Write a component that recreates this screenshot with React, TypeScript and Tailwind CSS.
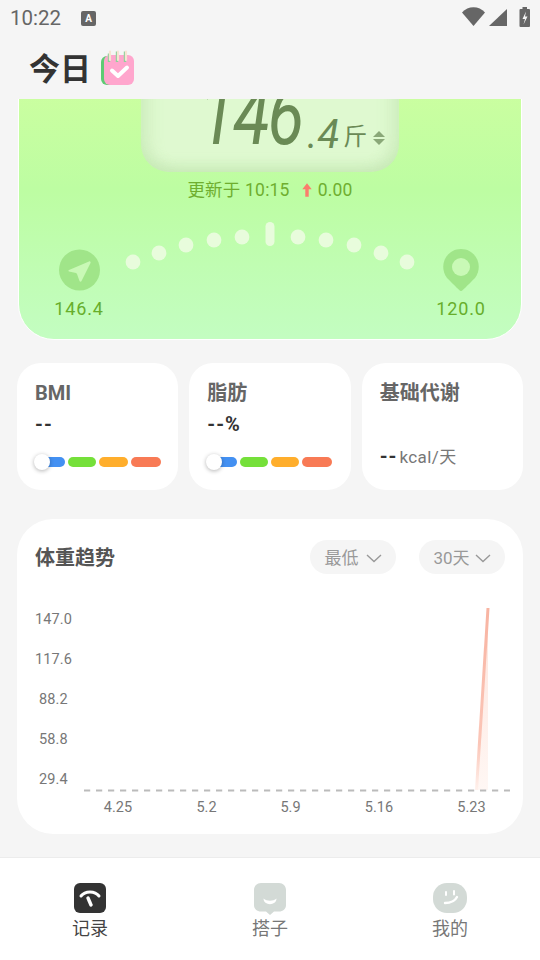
import React from "react";

const sans = "font-['Roboto','Noto_Sans_CJK_SC',sans-serif]";

function StatusIcons() {
  return (
    <svg width="68" height="24" viewBox="0 0 68 24" className="block">
      <path d="M0 6.5C6-0.5 17-0.5 23 6.5L11.5 20Z" fill="#666" />
      <path d="M27 20L45 3V20Z" fill="#666" />
      <rect x="57.5" y="3" width="10.5" height="18" rx="1" fill="#666" />
      <rect x="60.5" y="1" width="4.5" height="3" fill="#666" />
      <path d="M64 5.5L60.5 13H63L61.5 18.5L65.5 10.5H63Z" fill="#f5f5f5" />
    </svg>
  );
}

function CalendarIcon() {
  return (
    <svg width="33" height="36" viewBox="0 0 33 36" className="mt-[-2px] block">
      <rect x="0" y="6" width="28" height="29" rx="6" fill="#5ecb73" />
      <rect x="3" y="5" width="30" height="30" rx="6" fill="#ffa6cd" />
      <path d="M6 3.5V12M14 1.5V12M22 1.5V12" stroke="#8fd09a" strokeWidth="2.4" transform="translate(2 0)" />
      <path d="M6 1.5V10M14 1.5V10M22 1.5V10" stroke="#f7e3d2" strokeWidth="2.2" strokeLinecap="round" transform="translate(3 0)" />
      <path d="M11 20.5L17 26L26 17.5" stroke="#fff" strokeWidth="4" fill="none" strokeLinecap="round" strokeLinejoin="round" />
    </svg>
  );
}

function Gauge() {
  const xs = [133, 159, 186, 214, 242, 298, 326, 354, 381, 407];
  const ys = [261, 252, 244, 239, 236, 236, 239, 244, 252, 261];
  return (
    <svg width="300" height="50" viewBox="120 220 300 50" className="block">
      {xs.map((x, i) => (
        <circle key={x} cx={x} cy={ys[i]} r="7.4" fill="#e8fcdc" />
      ))}
      <rect x="265.5" y="221" width="9" height="24" rx="4.5" fill="#e8fcdc" />
    </svg>
  );
}

function Scale({ widths }: { widths: number[] }) {
  const colors = ["bg-[#4390f2]", "bg-[#75e03a]", "bg-[#ffae2c]", "bg-[#f87a55]"];
  return (
    <div className="relative mt-[21px] flex h-[10px] gap-[3px] pl-[6px]">
      {widths.map((w, i) => (
        <div key={i} className={`h-[10px] rounded-full ${colors[i]}`} style={{ width: w }} />
      ))}
      <div className="absolute left-[-1px] top-[-3px] h-4 w-4 rounded-full bg-white shadow-[0_1px_4px_rgba(0,0,0,0.3)]" />
    </div>
  );
}

function Chevron() {
  return (
    <svg width="16" height="9" viewBox="0 0 16 9" className="block">
      <path d="M1 1L8 7.5L15 1" stroke="#999" strokeWidth="1.4" fill="none" />
    </svg>
  );
}

function Chart() {
  const ys = [
    ["147.0", 624],
    ["117.6", 664],
    ["88.2", 704],
    ["58.8", 744],
    ["29.4", 784],
  ] as const;
  const xs = [
    ["4.25", 118],
    ["5.2", 206.5],
    ["5.9", 290.5],
    ["5.16", 379],
    ["5.23", 471.5],
  ] as const;
  return (
    <svg width="506" height="225" viewBox="17 600 506 225" className="block" fontFamily="Roboto, sans-serif">
      <defs>
        <linearGradient id="ln" x1="0" y1="0" x2="0" y2="1">
          <stop offset="0" stopColor="#f8b4a2" />
          <stop offset="0.75" stopColor="#fbc6b8" />
          <stop offset="1" stopColor="#fff1ec" />
        </linearGradient>
        <linearGradient id="ar" x1="0" y1="0" x2="0" y2="1">
          <stop offset="0" stopColor="#fde4dc" />
          <stop offset="1" stopColor="#fff7f4" />
        </linearGradient>
      </defs>
      <path d="M488 608L476 790H488Z" fill="url(#ar)" />
      <path d="M488 608L476.5 790" stroke="url(#ln)" strokeWidth="3" fill="none" />
      <line x1="84" x2="510" y1="790.5" y2="790.5" stroke="#bbb" strokeWidth="2" strokeDasharray="6.2 5.8" />
      {ys.map(([t, y], i) => (
        <text key={t} x={i < 2 ? 35 : 39} y={y} fontSize="14.5" letterSpacing="0.1" fill="#777">
          {t}
        </text>
      ))}
      {xs.map(([t, x]) => (
        <text key={t} x={x} y="812" fontSize="14.5" fill="#777" textAnchor="middle">
          {t}
        </text>
      ))}
    </svg>
  );
}

export default function App() {
  return (
    <div className={`flex h-[960px] w-[540px] flex-col overflow-hidden bg-[#f5f5f5] ${sans}`}>
      <div className="flex h-[36px] shrink-0 items-center pl-[10px] pr-[10px] text-[20.5px] text-[#666]">
        <span>10:22</span>
        <span className="ml-[20px] flex h-[15px] w-[15px] items-center justify-center rounded-[2px] bg-[#666] text-[10px] font-bold text-white">
          A
        </span>
        <div className="ml-auto">
          <StatusIcons />
        </div>
      </div>

      <div className="flex h-[63px] shrink-0 items-center gap-[10px] pl-[29px] pt-[3px]">
        <span className="text-[31px] font-bold leading-none text-[#333]">今日</span>
        <CalendarIcon />
      </div>

      <div className="min-h-0 flex-1 overflow-hidden">
        <div className="mx-[18px] mt-[-60px] flex h-[301px] flex-col rounded-b-[36px] border border-white bg-gradient-to-b from-[#d2ff9f] via-[#bdfda2] to-[#c3fdc1]">
          <div className="mx-auto flex h-[132px] w-[258px] shrink-0 items-end overflow-hidden rounded-b-[28px] bg-[#dff9d0] pb-[22px] pl-[58px] text-[#6a8a55] shadow-[inset_0_-8px_12px_rgba(170,215,150,0.22),inset_10px_0_14px_rgba(170,215,150,0.2),inset_-10px_0_14px_rgba(170,215,150,0.2)]">
            <span className="mr-[-20px] inline-block origin-left scale-x-[0.8] text-[84px] italic leading-[68px] tracking-[-3px]">146</span>
            <span className="text-[40px] italic leading-[30px]">.4</span>
            <span className="ml-[4px] text-[24px] leading-[26px]">斤</span>
            <div className="mb-[5px] ml-[6px] flex flex-col gap-[2px]">
              <div className="h-0 w-0 border-x-[6px] border-b-[6px] border-x-transparent border-b-[#8aa878]" />
              <div className="h-0 w-0 border-x-[6px] border-t-[6px] border-x-transparent border-t-[#8aa878]" />
            </div>
          </div>

          <div className="mt-[7px] flex items-center justify-center text-[17.5px] leading-[22px] tracking-[0.2px] text-[#6fae2f]">
            <span>更新于 10:15</span>
            <svg width="12" height="18" viewBox="0 0 14 18" className="ml-[11px] mr-[5px] block">
              <path d="M7 1L12.5 8H9V17H5V8H1.5Z" fill="#fb7d6c" />
            </svg>
            <span>0.00</span>
          </div>

          <div className="relative mt-[20px] flex items-start justify-between px-[35px]">
            <div className="mt-[28px] flex w-[50px] flex-col items-center">
              <svg width="41" height="42" viewBox="0 0 41 42" className="block">
                <circle cx="20.5" cy="21" r="20.5" fill="#a0e589" />
                <path d="M10 21L30 12.5C31 12 32 13 31.5 14L22.5 32C22 33 21 33 20.5 32L18 25C17.8 24.5 17.5 24.2 17 24L10 22.5C9.3 22.3 9.3 21.3 10 21Z" fill="#c9f9b6" />
              </svg>
              <span className="mt-[6px] whitespace-nowrap text-[18px] leading-[24px] tracking-[0.9px] text-[#67ae2b]">146.4</span>
            </div>
            <div className="absolute left-[101px] top-0">
              <Gauge />
            </div>
            <div className="mt-[28px] flex w-[50px] flex-col items-center">
              <svg width="36" height="42" viewBox="0 0 36 42" className="block">
                <path d="M18 42C17 42 16 41 4 29C-5 17 3 0 18 0C33 0 41 17 32 29C20 41 19 42 18 42Z" fill="#a0e589" />
                <circle cx="18" cy="18" r="9" fill="#c9f9b6" />
              </svg>
              <span className="mt-[6px] whitespace-nowrap text-[18px] leading-[24px] tracking-[0.9px] text-[#67ae2b]">120.0</span>
            </div>
          </div>
        </div>

        <div className="mx-[17px] mt-[23px] grid grid-cols-3 gap-[11px]">
          <div className="h-[127px] rounded-[24px] bg-white pl-[18px] pr-[17px] pt-[17px]">
            <div className="text-[20px] font-bold leading-[26px] text-[#666]">BMI</div>
            <div className="mt-[6px] h-[24px] text-[20px] font-bold leading-[24px] tracking-[1px] text-[#333]">--</div>
            <Scale widths={[24, 28, 29, 30]} />
          </div>
          <div className="h-[127px] rounded-[24px] bg-white pl-[18px] pr-[17px] pt-[17px]">
            <div className="text-[20px] font-bold leading-[26px] text-[#666]">脂肪</div>
            <div className="mt-[6px] h-[24px] text-[20px] font-bold leading-[24px] tracking-[1px] text-[#333]">--%</div>
            <Scale widths={[24, 28, 28, 30]} />
          </div>
          <div className="h-[127px] rounded-[24px] bg-white pl-[18px] pt-[17px]">
            <div className="text-[20px] font-bold leading-[26px] text-[#666]">基础代谢</div>
            <div className="mt-[38px] flex items-baseline gap-[2px]">
              <span className="text-[20px] font-bold leading-[24px] tracking-[1px] text-[#333]">--</span>
              <span className="text-[17px] leading-[24px] tracking-[0.4px] text-[#777]">kcal/天</span>
            </div>
          </div>
        </div>

        <div className="mx-[17px] mt-[29px] h-[315px] rounded-[36px] bg-white">
          <div className="flex h-[81px] items-start pl-[18px] pr-[18px] pt-[21px]">
            <span className="mt-[4px] text-[20px] font-bold leading-[28px] text-[#555]">体重趋势</span>
            <div className="ml-auto flex h-[34px] w-[86px] items-center justify-center gap-[7px] rounded-full bg-[#f5f5f5] pt-[3px] text-[17px] text-[#999]">
              最低
              <Chevron />
            </div>
            <div className="ml-[23px] flex h-[34px] w-[86px] items-center justify-center gap-[5px] rounded-full bg-[#f5f5f5] pt-[3px] text-[17px] text-[#999]">
              30天
              <Chevron />
            </div>
          </div>
          <Chart />
        </div>
      </div>

      <div className="flex h-[103px] shrink-0 border-t border-[#ececec] bg-white pt-[25px]">
        <div className="flex flex-1 flex-col items-center">
          <svg width="32" height="30" viewBox="0 0 32 30" className="block">
            <rect width="32" height="30" rx="6" fill="#333" />
            <path d="M7 13C11 7.5 21 7.5 25 13" stroke="#fff" strokeWidth="3" fill="none" strokeLinecap="round" />
            <path d="M14 15L17 22" stroke="#fff" strokeWidth="3.4" strokeLinecap="round" />
          </svg>
          <span className="mt-[3px] text-[18px] leading-[26px] text-[#444]">记录</span>
        </div>
        <div className="flex flex-1 flex-col items-center">
          <svg width="32" height="32" viewBox="0 0 32 32" className="mb-[-2px] block">
            <path d="M7 0H25C29 0 32 3 32 7V22C32 26 29 28.5 25 28.5H20L16 32L12 28.5H7C3 28.5 0 26 0 22V7C0 3 3 0 7 0Z" fill="#d3dad6" />
            <path d="M9.5 15.5C13 18.5 19 18.5 22.5 15.5C22.5 23 9.5 23 9.5 15.5Z" fill="#fff" />
          </svg>
          <span className="mt-[3px] text-[18px] leading-[26px] text-[#777]">搭子</span>
        </div>
        <div className="flex flex-1 flex-col items-center">
          <svg width="34" height="30" viewBox="0 0 34 30" className="block">
            <rect width="34" height="30" rx="14" fill="#d3dad6" />
            <path d="M13 9V12M21 8V11.5" stroke="#fff" strokeWidth="2" strokeLinecap="round" />
            <path d="M12 20C17 20 22 18 24 14" stroke="#fff" strokeWidth="2.4" fill="none" strokeLinecap="round" />
          </svg>
          <span className="mt-[3px] text-[18px] leading-[26px] text-[#777]">我的</span>
        </div>
      </div>
    </div>
  );
}
